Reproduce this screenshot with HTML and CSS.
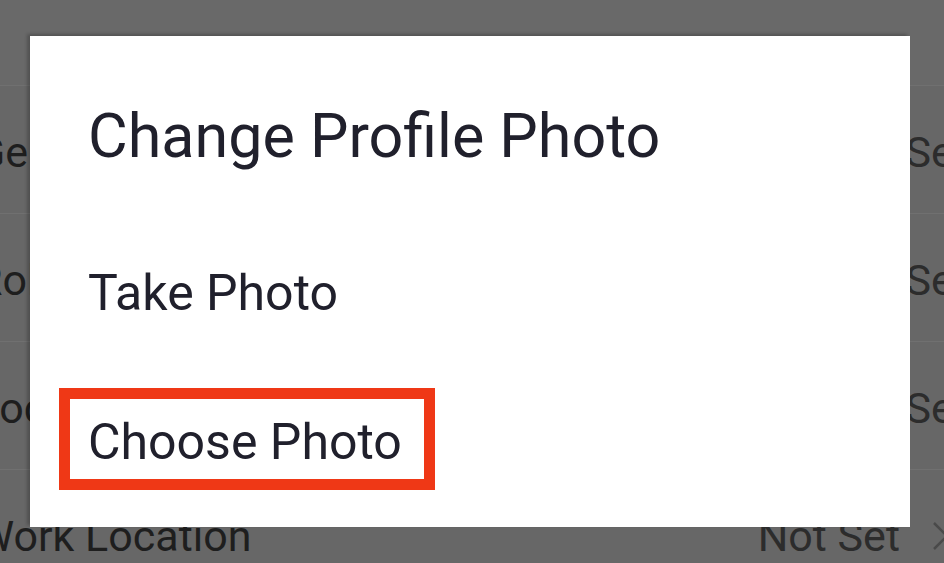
FILE: index.html
```html
<!DOCTYPE html>
<html lang="en">
<head>
<meta charset="utf-8">
<title>Change Profile Photo</title>
<link rel="stylesheet" href="styles.css">
</head>
<body>
<div class="screen">
  <div class="topbar"></div>
  <div class="row"><span class="label">Gender</span><span class="value value-edge">Not Set</span></div>
  <div class="row"><span class="label">Role</span><span class="value value-edge">Not Set</span></div>
  <div class="row"><span class="label">Location</span><span class="value value-edge">Not Set</span></div>
  <div class="row"><span class="label">Work Location</span><span class="value">Not Set</span>
    <svg class="chev" width="20" height="30" viewBox="0 0 20 30"><path d="M2 2 L15 15 L2 28" fill="none" stroke="#4a4a4a" stroke-width="2.5"/></svg>
  </div>
</div>
<div class="dialog">
  <h1 class="dialog-title">Change Profile Photo</h1>
  <div class="option option-take">Take Photo</div>
  <div class="option option-choose">Choose Photo</div>
</div>
</body>
</html>
```
FILE: styles.css
```css
html, body {
  margin: 0;
  padding: 0;
}
body {
  width: 944px;
  height: 563px;
  overflow: hidden;
  background: #676767;
  font-family: Roboto, "Noto Sans", sans-serif;
  position: relative;
}
.screen {
  display: flex;
  flex-direction: column;
  overflow: hidden;
  height: 563px;
}
.topbar {
  height: 85px;
  flex: none;
  background: #696969;
}
.row {
  flex: none;
  height: 128px;
  border-top: 1px solid #707070;
  display: flex;
  align-items: center;
  padding-top: 4px;
  box-sizing: border-box;
  font-size: 43px;
}
.label {
  flex: 1;
  margin-left: -24px;
  color: #1e1e1e;
  white-space: nowrap;
}
.value {
  color: #2c2c2c;
  white-space: nowrap;
}
.value-edge {
  margin-right: -24px;
}
.chev {
  flex: none;
  margin-left: 32px;
  margin-right: -8px;
}
.dialog {
  position: absolute;
  left: 30px;
  top: 36px;
  width: 880px;
  height: 491px;
  background: #ffffff;
  box-shadow: -3px -2px 3px rgba(0, 0, 0, 0.22);
  display: flex;
  flex-direction: column;
  align-items: flex-start;
  color: #20202c;
}
.dialog-title {
  margin: 0;
  padding: 64px 0 0 58px;
  font-size: 61px;
  line-height: 72px;
  font-weight: 400;
}
.option {
  font-size: 50px;
  line-height: 60px;
}
.option-take {
  margin-top: 91px;
  padding-left: 58px;
}
.option-choose {
  margin-top: 65px;
  margin-left: 29px;
  border: 11px solid #ef3816;
  padding: 13px 22px 7px 18px;
}
```
